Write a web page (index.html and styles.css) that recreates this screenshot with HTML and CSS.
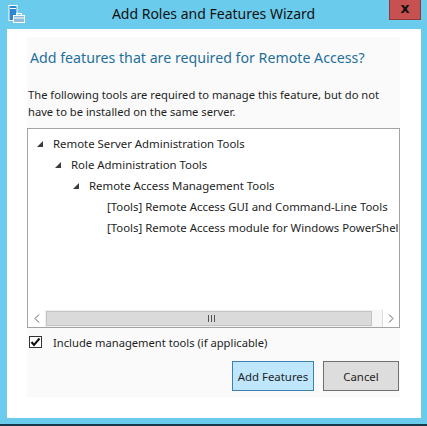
FILE: index.html
```html
<!DOCTYPE html>
<html>
<head>
<meta charset="utf-8">
<link rel="stylesheet" href="styles.css">
</head>
<body>
<div class="window">
  <div class="titlebar">
    <svg class="appicon" width="18" height="18" viewBox="0 0 18 18">
      <rect x="1" y="0.5" width="8" height="15" fill="#2d86d0" stroke="#ffffff" stroke-width="1"/>
      <rect x="2" y="3" width="6" height="1" fill="#ffffff"/>
      <rect x="5.5" y="10.5" width="11" height="7" fill="#8fb9d6" stroke="#ffffff" stroke-width="1"/>
      <rect x="8.5" y="8.5" width="5" height="2" fill="none" stroke="#ffffff" stroke-width="1"/>
      <rect x="5.5" y="12.5" width="11" height="1" fill="#ffffff"/>
    </svg>
    <div class="title">Add Roles and Features Wizard</div>
    <div class="close">x</div>
  </div>
  <div class="client">
    <div class="panel">
      <h1 class="heading">Add features that are required for Remote Access?</h1>
      <p class="desc">The following tools are required to manage this feature, but do not<br>have to be installed on the same server.</p>
      <div class="listbox">
        <div class="tree">
          <div class="row lvl0"><svg class="tri" width="6" height="6" viewBox="0 0 6 6"><polygon points="6,0 6,6 0,6" fill="#3a3a3a"/></svg><span>Remote Server Administration Tools</span></div>
          <div class="row lvl1"><svg class="tri" width="6" height="6" viewBox="0 0 6 6"><polygon points="6,0 6,6 0,6" fill="#3a3a3a"/></svg><span>Role Administration Tools</span></div>
          <div class="row lvl2"><svg class="tri" width="6" height="6" viewBox="0 0 6 6"><polygon points="6,0 6,6 0,6" fill="#3a3a3a"/></svg><span>Remote Access Management Tools</span></div>
          <div class="row lvl3"><span>[Tools] Remote Access GUI and Command-Line Tools</span></div>
          <div class="row lvl3"><span>[Tools] Remote Access module for Windows PowerShell</span></div>
        </div>
        <div class="hscroll">
          <div class="sbtn left"><svg width="6" height="9" viewBox="0 0 6 9"><polyline points="5,0.5 1,4.5 5,8.5" fill="none" stroke="#606060" stroke-width="1"/></svg></div>
          <div class="thumb"><div class="grip"><i></i><i></i><i></i></div></div>
          <div class="track"></div>
          <div class="sbtn right"><svg width="6" height="9" viewBox="0 0 6 9"><polyline points="1,0.5 5,4.5 1,8.5" fill="none" stroke="#606060" stroke-width="1"/></svg></div>
        </div>
      </div>
      <label class="check">
        <span class="box"><svg width="11" height="10" viewBox="0 0 11 10"><polyline points="1.5,5 4,8 9.5,1.5" fill="none" stroke="#111" stroke-width="2"/></svg></span>
        <span class="label">Include management tools (if applicable)</span>
      </label>
      <div class="buttons">
        <div class="btn primary">Add Features</div>
        <div class="btn">Cancel</div>
      </div>
    </div>
  </div>
</div>
</body>
</html>
```
FILE: styles.css
```css
* { box-sizing: border-box; }
html, body { margin: 0; padding: 0; }
body {
  width: 427px;
  height: 426px;
  background: #17384a;
  font-family: "Noto Sans", "Open Sans", sans-serif;
  color: #1e1e1e;
  overflow: hidden;
}
.window {
  height: 424px;
  background: #6bcbec;
  display: flex;
  flex-direction: column;
}
.titlebar {
  height: 29px;
  display: flex;
  align-items: flex-start;
  position: relative;
}
.appicon {
  margin: 5px 0 0 8px;
}
.title {
  position: absolute;
  left: 0;
  right: 0;
  top: 4px;
  text-align: center;
  font-size: 14px;
  line-height: 20px;
  color: #111;
}
.close {
  position: absolute;
  top: 0;
  left: 389px;
  width: 32px;
  height: 20px;
  background: #c75050;
  border: 1px solid #8e3a3a;
  border-top: none;
  color: #111;
  font-weight: bold;
  font-size: 14px;
  line-height: 17px;
  text-align: center;
  font-family: "DejaVu Sans", sans-serif;
}
.client {
  margin: 0 6px 0 7px;
  height: 389px;
  background: #ffffff;
  padding-top: 8px;
}
.panel {
  margin-left: 20px;
  width: 373px;
  background: #fafafa;
  padding-bottom: 6px;
}
.heading {
  margin: 0;
  padding: 10px 0 0 3px;
  font-size: 14.2px;
  line-height: 22px;
  font-weight: normal;
  color: #1f6f9c;
  white-space: nowrap;
}
.desc {
  margin: 17px 0 0 1px;
  font-size: 11.2px;
  line-height: 17px;
  white-space: nowrap;
}
.listbox {
  margin-top: 8px;
  height: 200px;
  border: 1px solid #a3a3a3;
  background: #fff;
  display: flex;
  flex-direction: column;
}
.tree {
  flex: 1;
  padding-top: 4px;
  overflow: hidden;
}
.row {
  height: 21px;
  display: flex;
  align-items: center;
  font-size: 11.4px;
  white-space: nowrap;
}
.tri { flex: none; margin-right: 10px; }
.lvl0 { padding-left: 9px; }
.lvl1 { padding-left: 27px; }
.lvl2 { padding-left: 45px; }
.lvl3 { padding-left: 79px; }
.hscroll {
  height: 17px;
  display: flex;
  background: #f0f0f0;
}
.sbtn {
  width: 17px;
  display: flex;
  align-items: center;
  justify-content: center;
  background: #fff;
}
.sbtn.right { border-left: 1px solid #dcdcdc; width: 17px; }
.thumb {
  width: 326px;
  margin: 1px 0 1px 1px;
  background: #dadada;
  border: 1px solid #c4c4c4;
  display: flex;
  align-items: center;
  justify-content: center;
}
.grip { display: flex; gap: 2px; margin-left: 4px; }
.grip i { width: 1px; height: 7px; background: #555; }
.track { flex: 1; background: #f7f7f7; }
.check {
  margin-top: 6px;
  height: 16px;
  display: flex;
  align-items: center;
  font-size: 11.2px;
}
.box {
  width: 13px;
  height: 12px;
  margin-left: 2px;
  border: 1px solid #333;
  background: #fff;
  display: flex;
  align-items: center;
  justify-content: center;
}
.label { margin-left: 11px; }
.buttons {
  margin-top: 11px;
  display: flex;
  justify-content: flex-end;
  gap: 9px;
  padding-right: 1px;
}
.btn {
  height: 30px;
  width: 76px;
  border: 1px solid #707070;
  background: #dddddd;
  font-size: 11.4px;
  display: flex;
  align-items: center;
  justify-content: center;
}
.btn.primary {
  width: 82px;
  background: #bee6fd;
  border-color: #3c7fb1;
}
```
